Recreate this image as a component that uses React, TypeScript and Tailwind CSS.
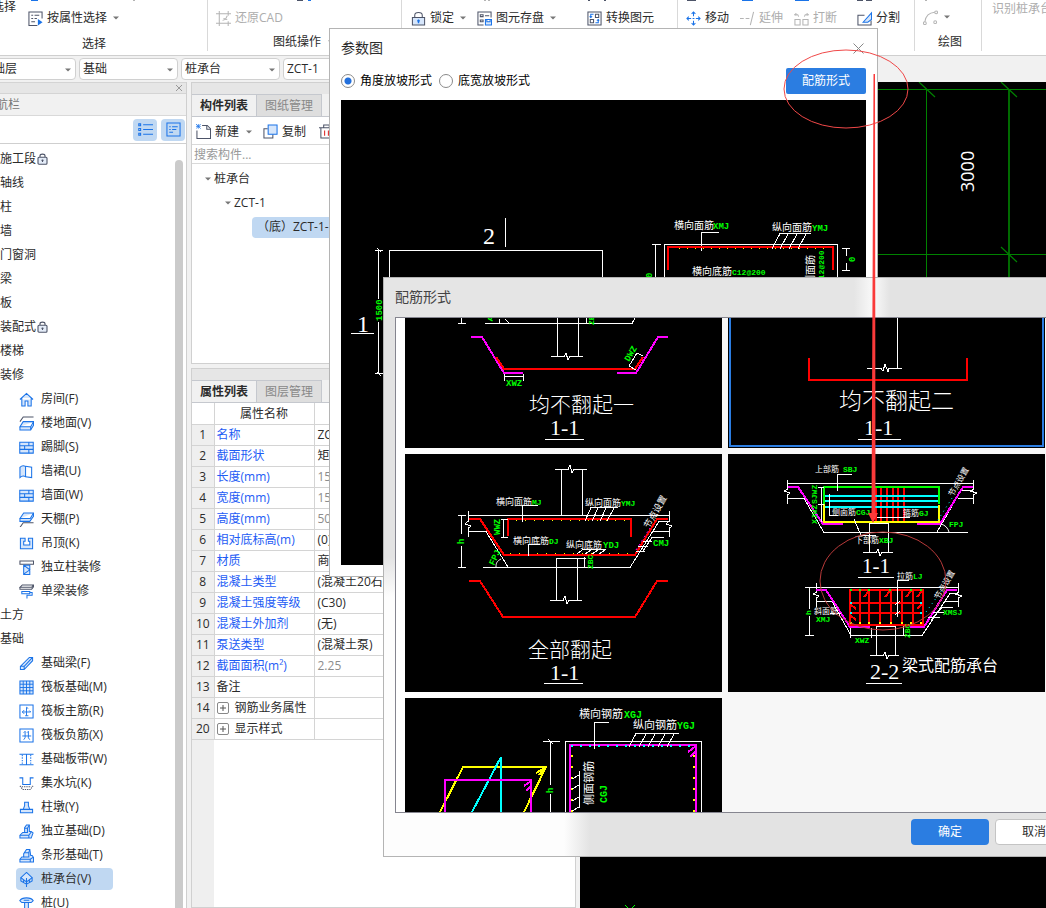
import { useState, type ReactNode } from 'react';
import clsx from 'clsx';

const BLUE = '#1a73e8';
const LIGHT = '#d6e6fb';
const DARK = '#4d5468';
const GREY = '#b4b4b4';

function Icon({ children }: { children: ReactNode }) {
  return (
    <svg
      width="15"
      height="15"
      viewBox="0 0 16 16"
      fill="none"
      stroke={BLUE}
      strokeWidth="1.1"
      className="shrink-0"
      aria-hidden="true"
    >
      {children}
    </svg>
  );
}

function Caret({ className }: { className?: string }) {
  return (
    <svg width="6" height="4" viewBox="0 0 6 4" className={clsx('shrink-0', className)} aria-hidden="true">
      <path d="M0 .5h6L3 3.500z" fill="#777" />
    </svg>
  );
}

function Lock() {
  return (
    <svg width="11" height="12" viewBox="0 0 11 12" fill="none" stroke={DARK} strokeWidth="1.1" aria-hidden="true">
      <path d="M3 4V2.800C3 .6 8 .6 8 2.800V4" />
      <rect x="1" y="4.200" width="9" height="7" rx="1" fill="#e4ecf8" />
      <path d="M5.500 6.500v2.600M4.500 7.400h2" />
    </svg>
  );
}

/* ---------- navigation tree ---------- */

const bricks = (
  <>
    <path d="M.8 2.500h14.400v11.500H.8z" fill={LIGHT} />
    <path d="M.8 6.200h14.400M.8 10h14.400M10.500 2.500v3.700M6 6.200v3.800M10.500 10v4" />
  </>
);

const treeIcons: Record<string, ReactNode> = {
  '房间(F)': <path d="M1 8 8 1.500 15 8M3 6.500V15h3.500V9.500h3V15H13V6.500" fill={LIGHT} />,
  '楼地面(V)': (
    <>
      <path d="M1 6 4.500 1h11" stroke={DARK} />
      <path d="M1 11.500 4.500 6h11L12.500 11.500zM1 11.500V15h11.500l3-5V6M12.500 11.500V15" fill={LIGHT} />
    </>
  ),
  '踢脚(S)': bricks,
  '墙裙(U)': (
    <>
      <path d="M1 3.500C3 1.500 5 1.500 7 2.500v11c-2-1-4-1-6 1z" fill={LIGHT} />
      <path d="M7 2.500 13.500 3.500V14.500L7 13.500" />
    </>
  ),
  '墙面(W)': bricks,
  '天棚(P)': (
    <>
      <path d="M1 7 5 1h10.500L12 7zM1 7v3h10.500L15.500 4.500V1" fill={LIGHT} />
      <path d="M1 16.500 4.500 11.500h11" stroke={DARK} />
    </>
  ),
  '吊顶(K)': <path d="M1.500 2.500H6.500V5.500H5v4h6.500v-4H10V2.500h4.500v11h-13z" fill={LIGHT} />,
  '独立柱装修': (
    <>
      <path d="M1 1h14.500v3.500H1z" stroke={DARK} />
      <path d="M5 5.500h6.500V15.500H5zM5 5.500l6.500 5L5 15" fill={LIGHT} />
    </>
  ),
  '单梁装修': (
    <>
      <path d="M1 3.500 3.500 1h12L13.500 3.500zM1 3.500v2h12.500L15.500 3V1" stroke={DARK} />
      <path d="M3 8h8.500v2.500H3zM11.500 9H14v3H8.500v3.500" />
    </>
  ),
  '基础梁(F)': <path d="M1.500 11 11 1.500h3.500v3.500L5.500 14.500h-4zM1.500 11h4v3.500M5.500 11 14.500 1.500" fill={LIGHT} />,
  '筏板基础(M)': (
    <>
      <path d="M1 1h14v14H1z" fill={LIGHT} />
      <path d="M1 4.500h14M1 8h14M1 11.500h14M4.500 1v14M8 1v14M11.500 1v14" strokeWidth="1" />
    </>
  ),
  '筏板主筋(R)': (
    <>
      <path d="M1 1h14v14H1z" />
      <path d="M8 3.500v9M3.500 8.500h9M9.500 5C9 3.500 8.500 3.500 8 3.500M5.500 6.500l-2 2 2 2M12.500 8.500 11 7M6.500 12.500h3.500" strokeWidth="1" />
    </>
  ),
  '筏板负筋(X)': (
    <>
      <path d="M1 1h14v14H1z" />
      <path d="M6.500 3.500v7l-1.500 2M10 3.500v7l1.500 2M3.500 8.500h9.500M5 5l1.500-1.500M8.500 5 10 3.500" strokeWidth="1" />
    </>
  ),
  '基础板带(W)': (
    <>
      <path d="M.5 2.500h15M.5 13.500h15M8 2.500v11" />
      <path d="M3.500 3v10.500M12.500 3v10.500" strokeDasharray="1.500 1.200" />
    </>
  ),
  '集水坑(K)': (
    <>
      <path d="M.5 2h3.500v7h8V2h3.500" />
      <path d="M1 10.500 4 14.500h8l3-4M3 11.500h10" stroke={DARK} strokeDasharray="1.400 1" />
    </>
  ),
  '柱墩(Y)': <path d="M6 2.500h4v3.500l1.500 4h-7L6 6zM1.500 10h13v3.500h-13z" fill={LIGHT} />,
  '独立基础(D)': (
    <>
      <path d="M1 12 4 9h2V4l2-3h3v7h2l2 1.500-2 5.500H1z" fill={LIGHT} />
      <path d="M1 12h9.500l2.500-3.500M10.500 12v3M6 9h3V4.500H6M9 4.500 11 1" />
    </>
  ),
  '条形基础(T)': (
    <>
      <path d="M1 12 3 9.500h2V6l3-4.500h3.500l1 6.500H14l1.500 2v5H1z" fill={LIGHT} />
      <path d="M1 12h11l3-2M12 12v3M5 9.500h5.500V5H5.500M10.500 5l1-3.500" />
    </>
  ),
  '桩承台(V)': (
    <>
      <path d="M8 0.500 14 6 8 10.500 2 6z" fill={LIGHT} />
      <path d="M2 6v3.500L8 13l6-3.500V6M8 6.500V16M5 8.500v3M11 8.500v3" />
    </>
  ),
  '桩(U)': <path d="M.8 5C3 1 13 1 15.200 5L13 7H3zM6 7v9h4V7M5 4.500h6" fill={LIGHT} />,
};

type NavRow = { label: string; locked?: boolean; child?: boolean };

const navRows: NavRow[] = [
  { label: '施工段', locked: true },
  { label: '轴线' },
  { label: '柱' },
  { label: '墙' },
  { label: '门窗洞' },
  { label: '梁' },
  { label: '板' },
  { label: '装配式', locked: true },
  { label: '楼梯' },
  { label: '装修' },
  ...['房间(F)', '楼地面(V)', '踢脚(S)', '墙裙(U)', '墙面(W)', '天棚(P)', '吊顶(K)', '独立柱装修', '单梁装修'].map(
    label => ({ label, child: true })
  ),
  { label: '土方' },
  { label: '基础' },
  ...[
    '基础梁(F)',
    '筏板基础(M)',
    '筏板主筋(R)',
    '筏板负筋(X)',
    '基础板带(W)',
    '集水坑(K)',
    '柱墩(Y)',
    '独立基础(D)',
    '条形基础(T)',
    '桩承台(V)',
    '桩(U)',
  ].map(label => ({ label, child: true })),
];

function NavPanel() {
  const [active, setActive] = useState('桩承台(V)');

  return (
    <aside className="flex w-[187px] shrink-0 flex-col border-r border-[#cfcfcf] bg-white">
      <div className="flex h-3 shrink-0 items-center justify-end border-y border-[#d4d4d4] bg-[#e6e6e6] pr-[3px]">
        <button aria-label="关闭导航栏">
          <svg width="8" height="8" viewBox="0 0 8 8" stroke="#999">
            <path d="M1 1l6 6M7 1 1 7" />
          </svg>
        </button>
      </div>
      <div className="flex h-[22px] shrink-0 items-center border-b border-[#d9d9d9] bg-[#f1f1f1] text-[#777]">
        <span className="-ml-4">导航栏</span>
      </div>
      <div className="flex h-7 shrink-0 items-center justify-end gap-1 border-b border-[#cfcfcf] pr-px">
        <button className="flex h-[22px] w-6 items-center justify-center rounded-sm bg-[#c0d8f2]" aria-label="列表">
          <Icon>
            <path d="M5.500 3H16M5.500 8H16M5.500 13H16M.8 2h2v2h-2zM.8 7h2v2h-2zM.8 12h2v2h-2z" />
          </Icon>
        </button>
        <button className="flex h-[22px] w-6 items-center justify-center rounded-sm bg-[#c0d8f2]" aria-label="详情">
          <Icon>
            <path d="M1 1h14v14H1zM3.500 5h1.500M6.500 5h6M3.500 8h1.500M6.500 8h4.500M3.500 11h4" />
          </Icon>
        </button>
      </div>
      <div className="flex min-h-0 flex-1 pt-[3px]">
        <ul className="min-w-0 flex-1 overflow-hidden">
          {navRows.map(row => (
            <li key={row.label} className={clsx('flex h-6 items-center', row.child && 'pl-4')}>
              <button
                onClick={() => setActive(row.label)}
                className={clsx(
                  'flex items-center whitespace-nowrap',
                  row.child ? 'h-[22px] gap-[7px] rounded-sm pl-[3px] pr-[22px]' : 'gap-px',
                  row.child && active === row.label && 'bg-[#c0d8f2]'
                )}
              >
                {row.child && <Icon>{treeIcons[row.label]}</Icon>}
                {row.label}
                {row.locked && <Lock />}
              </button>
            </li>
          ))}
        </ul>
        <div className="mr-[3px] mt-[13px] w-2 rounded-t bg-[#cbcbcb]" />
      </div>
    </aside>
  );
}

/* ---------- component list and properties ---------- */

function Tabs({ items }: { items: string[] }) {
  return (
    <div role="tablist" className="flex h-[23px] shrink-0 border-b border-[#c5c8ce] bg-[#f1f1f1]">
      {items.map((item, i) => (
        <button
          key={item}
          role="tab"
          aria-selected={i === 0}
          className={clsx(
            'w-[65px] border-r border-t border-[#c5c8ce]',
            i === 0 ? 'bg-[#f1f1f1] font-bold' : 'bg-[#dedede] text-[#888]'
          )}
        >
          {item}
        </button>
      ))}
    </div>
  );
}

const properties = [
  { no: 1, name: '名称', value: 'ZCT-1' },
  { no: 2, name: '截面形状', value: '矩形' },
  { no: 3, name: '长度(mm)', value: '1500', muted: true },
  { no: 4, name: '宽度(mm)', value: '1500', muted: true },
  { no: 5, name: '高度(mm)', value: '500', muted: true },
  { no: 6, name: '相对底标高(m)', value: '(0)' },
  { no: 7, name: '材质', value: '商品混凝土' },
  { no: 8, name: '混凝土类型', value: '(混凝土20石)' },
  { no: 9, name: '混凝土强度等级', value: '(C30)' },
  { no: 10, name: '混凝土外加剂', value: '(无)' },
  { no: 11, name: '泵送类型', value: '(混凝土泵)' },
  { no: 12, name: '截面面积(m²)', value: '2.25', muted: true },
  { no: 13, name: '备注', value: '', plain: true },
  { no: 14, name: '钢筋业务属性', value: '', plain: true, group: true },
  { no: 20, name: '显示样式', value: '', plain: true, group: true },
];

function PropertyTable() {
  return (
    <table className="w-full table-fixed border-collapse text-left">
      <colgroup>
        <col className="w-[22px]" />
        <col className="w-[100px]" />
        <col />
      </colgroup>
      <thead>
        <tr className="h-[21px] border-b border-[#d4d4d4]">
          <th className="border-r border-[#d4d4d4]" aria-label="序号" />
          <th className="border-r border-[#d4d4d4] p-0 pt-[2px] text-center font-normal">属性名称</th>
          <th className="p-0 pt-[2px] text-center font-normal">属性值</th>
        </tr>
      </thead>
      <tbody>
        {properties.map(p => (
          <tr key={p.no} className="h-[21px] border-b border-[#d4d4d4]">
            <td className="border-r border-[#d4d4d4] bg-[#efefef] p-0 text-center">{p.no}</td>
            <td
              className={clsx(
                'whitespace-nowrap border-r border-[#d4d4d4] p-0 pl-[2px]',
                !p.plain && 'text-[#1d5cf5]'
              )}
            >
              <span className="flex items-center gap-[6px]">
                {p.group && (
                  <button
                    aria-label={`展开${p.name}`}
                    className="flex size-3 items-center justify-center rounded-xs border border-[#888]"
                  >
                    <svg width="6" height="6" viewBox="0 0 6 6" stroke="#555">
                      <path d="M0 3h6M3 0v6" />
                    </svg>
                  </button>
                )}
                {p.name}
              </span>
            </td>
            <td className={clsx('whitespace-nowrap p-0 pl-[3px]', p.muted && 'text-[#8c8c8c]')}>{p.value}</td>
          </tr>
        ))}
      </tbody>
    </table>
  );
}

function ComponentPanel() {
  return (
    <section className="ml-1 flex w-[385px] shrink-0 flex-col">
      <div className="flex h-[282px] shrink-0 flex-col border border-[#d0d0d0] bg-white">
        <div className="h-[11px] shrink-0 bg-[#e6e6e6]" />
        <Tabs items={['构件列表', '图纸管理']} />
        <div className="flex h-7 shrink-0 items-center border-b border-[#d9d9d9] pl-1 pt-[2px]">
          <button className="flex items-center gap-1">
            <Icon>
              <path d="M6.500 1.500H12l3.500 3.500v10.500H1V7" stroke={DARK} />
              <path d="M11.500 1.500v4H15.500" stroke={DARK} />
              <path d="M0 0l5 5M5 0 0 5M2.500 0v5M0 2.500h5" strokeWidth="0.800" />
            </Icon>
            新建
            <Caret className="ml-[3px]" />
          </button>
          <button className="ml-[11px] flex items-center gap-1">
            <Icon>
              <path d="M5 5H1v10h9.500v-4" stroke={DARK} />
              <path d="M5.500 1h9.500v10H5.500z" fill={LIGHT} />
            </Icon>
            复制
          </button>
          <button className="ml-[13px] flex items-center gap-1">
            <Icon>
              <path d="M0 4h16M2 4v11h12V4M5 4V1h6v3" stroke={DARK} />
              <path d="M6 7v5.500M10 7v5.500" stroke="#d22" />
            </Icon>
            删除
          </button>
        </div>
        <input
          aria-label="搜索构件"
          placeholder="搜索构件..."
          className="h-[19px] w-full shrink-0 border-b border-[#d9d9d9] pl-[2px] outline-none placeholder:text-[#999]"
        />
        <ul className="pt-[3px]">
          <li className="flex h-6 items-center gap-[3px] pl-[13px]">
            <Caret />
            桩承台
          </li>
          <li className="flex h-6 items-center gap-[3px] pl-[33px]">
            <Caret />
            ZCT-1
          </li>
          <li className="flex h-6 items-center pl-[60px]">
            <button className="h-[21px] w-[200px] rounded-sm bg-[#c0d8f2] pl-[5px] text-left">（底）ZCT-1-1</button>
          </li>
        </ul>
      </div>
      <div className="mt-1 flex min-h-0 flex-1 flex-col border border-[#d0d0d0] bg-white">
        <div className="h-[11px] shrink-0 bg-[#e6e6e6]" />
        <Tabs items={['属性列表', '图层管理']} />
        <PropertyTable />
        <div className="w-[22px] flex-1 bg-[#efefef]" />
      </div>
    </section>
  );
}

/* ---------- ribbon ---------- */

function Tool({ label, icon, muted, caret }: { label?: string; icon: ReactNode; muted?: boolean; caret?: boolean }) {
  return (
    <button className={clsx('flex h-5 items-center gap-1 whitespace-nowrap', muted && 'text-[#adadad]')}>
      <Icon>{icon}</Icon>
      {label}
      {caret && <Caret className="ml-[2px]" />}
    </button>
  );
}

function Ribbon() {
  return (
    <header className="relative flex h-14 shrink-0 overflow-hidden border-b border-[#cfcfcf] bg-white">
      {/* bottom edge of the tool row scrolled out above */}
      <svg width="1046" height="1" viewBox="0 0 1046 1" className="absolute left-0 top-0" aria-hidden="true">
        <path d="M31 .5h7M308 .5h3M742 .5h11M795 .5h14" stroke={BLUE} />
        <path d="M297 .5h6M687 .5h9M857 .5h6M866 .5h6M588 .5h2M604 .5h2" stroke={DARK} />
        <path d="M133 .5h2M484 .5h2M488 .5h2M925 .5h2" stroke={GREY} />
      </svg>
      <div className="flex h-[51px] w-[208px] shrink-0 flex-col border-r border-[#d9d9d9]">
        <div className="flex h-7 items-start">
          <span className="-ml-2 -mt-[2px]">选择</span>
          <div className="ml-3 pt-2">
            <Tool
              caret
              label="按属性选择"
              icon={
                <>
                  <path d="M10 15.500H1V1h14v7" stroke={DARK} />
                  <path d="M3.500 4.500h2M7 4.500h5M3.500 8h2M7 8h2.500M3.500 11.500h4" stroke={DARK} />
                  <path d="M10.500 8.500v7l5-3.500z" fill={BLUE} stroke="none" />
                </>
              }
            />
          </div>
        </div>
        <div className="pl-[82px] pt-[7px]">选择</div>
      </div>
      <div className="flex h-[51px] w-[194px] shrink-0 flex-col border-r border-[#d9d9d9] pl-2 pt-2">
        <Tool
          muted
          label="还原CAD"
          icon={<path d="M3.500 0v16M0 3h16M13 0v5M0 13h16M13 11v5M7 10l3-1 2-4M8 8l4 1" stroke={GREY} />}
        />
        <div className="flex items-center gap-1 pl-[57px] pt-[5px]">
          图纸操作 <Caret className="ml-[3px]" />
        </div>
      </div>
      <div className="flex h-[51px] w-[276px] shrink-0 items-start border-r border-[#d9d9d9] pl-[9px] pt-2">
        <Tool
          caret
          label="锁定"
          icon={
            <>
              <path d="M4 7V4.500C4 .5 12 .5 12 4.500V7" stroke={DARK} />
              <path d="M1.500 7h13v8h-13z" stroke={DARK} fill={LIGHT} />
              <path d="M8 9v4M6.500 10.500h3" strokeWidth="1.500" />
            </>
          }
        />
        <div className="ml-[11px]">
          <Tool
            caret
            label="图元存盘"
            icon={
              <>
                <path d="M7 15H1V1h14v6" stroke={DARK} />
                <path d="M3.500 4h3v2h-3zM8.500 5H13M3.500 9.500h3v2h-3z" stroke={DARK} />
                <path d="M9 9h6.500v6H9zM10.500 9v2.500H14V9" fill={LIGHT} />
              </>
            }
          />
        </div>
        <div className="ml-[31px]">
          <Tool
            label="转换图元"
            icon={
              <>
                <path d="M1 1h14v14H1z" stroke={DARK} />
                <path d="M9 3.500h3.500V7H9zM3.500 9H7v3.500H3.500z" stroke={DARK} />
                <path d="M7 3.500H4V7M9 12.500h3V9M2.800 5.800 4 7l1.500-1.200M10.500 10.200 12 9l1 1.200" />
              </>
            }
          />
        </div>
      </div>
      <div className="flex h-[51px] w-[237px] shrink-0 items-start border-r border-[#d9d9d9] pl-2 pt-2">
        <Tool
          label="移动"
          icon={
            <path d="M8 1v4.500M8 10.500V15M1 8h4.500M10.500 8H15M6 3l2-2 2 2M6 13l2 2 2-2M3 6 1 8l2 2M13 6l2 2-2 2M7 8h2" />
          }
        />
        <div className="ml-[11px]">
          <Tool muted label="延伸" icon={<path d="M0 8h4M6 8h4M11 15l3.500-14" stroke={GREY} />} />
        </div>
        <div className="ml-[11px]">
          <Tool
            muted
            label="打断"
            icon={<path d="M1 9h5.500v6H1zM9.500 9H15v6H9.500zM0 4h4l1 2M16 4h-4l-1 2M2 2v3M14 2v3" stroke={GREY} />}
          />
        </div>
        <div className="ml-5">
          <Tool
            label="分割"
            icon={
              <>
                <path d="M8 4.500H1V15h14v-5" stroke={DARK} />
                <path d="M6.500 12 15.500 2v7l-4 3z" fill={LIGHT} />
              </>
            }
          />
        </div>
      </div>
      <div className="flex h-[51px] w-[67px] shrink-0 flex-col border-r border-[#d9d9d9] pl-2 pt-2">
        <Tool
          caret
          icon={
            <>
              <path d="M2 12.500C3 6 7 3 12.500 2.500" stroke={GREY} />
              <circle cx="2" cy="14" r="1.500" stroke={GREY} />
              <circle cx="14" cy="2.500" r="1.500" stroke={GREY} />
              <circle cx="13" cy="13" r="1.500" stroke={GREY} />
            </>
          }
        />
        <div className="pl-[15px] pt-[7px]">绘图</div>
      </div>
      <div className="shrink-0 whitespace-nowrap pl-2.5 text-[#adadad]">
        <button className="-mt-[2px]">识别桩承台</button>
      </div>
    </header>
  );
}

const selectors = ['基础层', '基础', '桩承台', 'ZCT-1'];

function SelectorBar() {
  return (
    <div className="flex h-[26px] shrink-0 gap-[3px] bg-[#f1f1f1] pt-[2px]">
      {selectors.map((s, i) => (
        <div key={s} className={clsx('relative h-[22px] w-[99px] shrink-0', i === 0 && '-ml-[23px]')}>
          <select
            aria-label={s}
            className="size-full appearance-none rounded-sm border border-[#d0d0d0] bg-white pl-[3px] outline-none"
          >
            <option>{s}</option>
          </select>
          <Caret className="pointer-events-none absolute right-[5px] top-[10px]" />
        </div>
      ))}
    </div>
  );
}

/* ---------- CAD drawings ---------- */

function Line({ p, c = '#fff', w = 1 }: { p: string; c?: string; w?: number }) {
  return <path d={p} stroke={c} strokeWidth={w} fill="none" shapeRendering="crispEdges" />;
}

type LabelProps = { x: number; y: number; c?: string; s?: string; r?: number; children: string };

function Label({ x, y, c = '#fff', s = 'text-[9px]', r = 0, children }: LabelProps) {
  return (
    <text
      x={x}
      y={y}
      fill={c}
      className={clsx(
        "font-['Liberation_Mono','Noto_Sans_CJK_SC',monospace]",
        s,
        c !== '#fff' && 'font-bold'
      )}
      transform={r ? `rotate(${r} ${x} ${y})` : undefined}
    >
      {children}
    </text>
  );
}

function Caption({ x, y, children, s = 'text-[22px]' }: { x: number; y: number; children: string; s?: string }) {
  return (
    <text x={x} y={y} fill="#fff" className={clsx("font-['Liberation_Serif','Noto_Sans_CJK_SC',serif] font-light", s)}>
      {children}
    </text>
  );
}

const GREEN = '#00ff00';
const RED = '#ff0000';
const PINK = '#ff00ff';
const CYAN = '#00ffff';
const YELLOW = '#ffff00';

const range = (from: number, to: number, step: number) => {
  const out: number[] = [];
  for (let v = from; v <= to; v += step) out.push(v);
  return out;
};

function Dots({ xs, ys, c, size = 2 }: { xs: number[]; ys: number[]; c: string; size?: number }) {
  return (
    <g fill={c} shapeRendering="crispEdges">
      {xs.flatMap(x => ys.map(y => <rect key={`${x}-${y}`} x={x} y={y} width={size} height={size} />))}
    </g>
  );
}

// all drawings share one sheet coordinate system, every frame shows its own window of it
function ParameterDrawing() {
  return (
    <svg viewBox="341 100 525 465" className="w-full bg-black" aria-label="参数图">
      <Caption x={483} y={244} s="text-[24px]">2</Caption>
      <Line p="M505.500 218V247" />
      <Caption x={357} y={332} s="text-[24px]">1</Caption>
      <Line p="M351 333.500H374" />
      <Line p="M389.500 340V250.500H602.500V340" />
      <Line p="M378.500 250V299M378.500 322V374M375 250.500H383M375 373.500H383M377 248l4 4M377 372l4 4" />
      <Label x={382} y={321} c={GREEN} r={-90}>1500</Label>
      <Label x={674} y={229} s="text-[10px]">横向面筋</Label>
      <Label x={713} y={229} c={GREEN}>XMJ</Label>
      <Line p="M701.500 251V232.500H719" />
      <Line p="M664.500 290V244.500H837.500V290" />
      <Line p="M668 270V247H833V270" c={RED} w={2} />
      <Dots xs={range(679, 826, 8)} ys={[248]} c={YELLOW} size={1} />
      <Line p="M655.500 290V244M652 244.500H661" />
      <Label x={652} y={278} c={GREEN} r={-90}>0</Label>
      <Label x={772} y={231} s="text-[10px]">纵向面筋</Label>
      <Label x={812} y={231} c={GREEN}>YMJ</Label>
      <Line p="M811 233.500H780L772 249M788 234l-8 15M797 234l-8 15M806 234l-8 15" />
      <Label x={692} y={275} s="text-[10px]">横向底筋</Label>
      <Label x={732} y={275} c={GREEN} s="text-[8px]">C12@200</Label>
      <Label x={814} y={285} s="text-[10px]" r={-90}>侧面筋</Label>
      <Label x={824} y={284} c={GREEN} s="text-[8px]" r={-90}>C12@200</Label>
      <Line p="M846.500 248V256M846.500 263V271M842 248.500H850M842 270.500H850" />
      <Label x={855} y={262} c={GREEN} r={-90}>0</Label>
    </svg>
  );
}

function FlatOne() {
  return (
    <svg viewBox="405 318 317 130" className="w-full bg-black">
      <Line p="M485 323.500H632L635 318M461.500 318V323M458 323.500H466M499 323v-4M505 319l4 4" />
      <Label x={492} y={322} c={GREEN} s="text-[8px]" r={-60}>PJ</Label>
      <Line p="M557.500 318V356M578.500 318V356M586.500 318V323" />
      <Line p="M551 356.500H564L566 353L568 360L570 356.500H583" />
      <Label x={594} y={325} c={GREEN} s="text-[8px]" r={-90}>ZBC</Label>
      <Line p="M471 337H482L504 373H523M617 373H636L658 337H668" c={PINK} w={2} />
      <Line p="M496 357L504 369H635L643 357" c={RED} w={2} />
      <Line p="M504.500 374V381M523.500 374V381M504 376.500H523M629 366L637 353L643 356M629 366l7 4" />
      <Label x={506} y={386} c={GREEN}>XWZ</Label>
      <Label x={629} y={362} c={GREEN} r={-60}>DWZ</Label>
      <Caption x={529} y={412} s="text-[21px]">均不翻起一</Caption>
      <Caption x={550} y={435}>1-1</Caption>
      <Line p="M545 439.500H584" />
    </svg>
  );
}

function FlatTwo() {
  return (
    <svg viewBox="728 318 317 130" className="w-full bg-black">
      <Line p="M730 318V446H1043V318" c="#2b7de1" w={2} />
      <Line p="M897.500 318V368M867 368.500H881L883 371L885 364L888 372V368.500H902" />
      <Line p="M809 358V380H967V358" c={RED} w={2} />
      <Caption x={839} y={409} s="text-[23px]">均不翻起二</Caption>
      <Caption x={864} y={435}>1-1</Caption>
      <Line p="M858 439.500H901" />
    </svg>
  );
}

function AllTurned() {
  return (
    <svg viewBox="405 454 317 238" className="w-full bg-black">
      <Line p="M555 469.500H568L570 465L572 473L574 469.500H587M561.500 469V515M582.500 469V515" />
      <Line p="M468 515.500H670M468.500 511V521L465 524L471 526L468.500 528V537M669.500 511V521L666 524L672 526L669.500 528V537" />
      <Line p="M468 531.500H486L508 567M483 567.500H630L659 521.500H669M653 531.500H669" />
      <Line p="M469 519H480L504 555H635L657 519H668" c={RED} w={2} />
      <Line p="M508 536V519H631V537" c={RED} w={2} />
      <Dots xs={range(516, 625, 9)} ys={[520]} c={YELLOW} size={1} />
      <Dots xs={range(510, 630, 9)} ys={[553]} c={YELLOW} size={1} />
      <Line p="M461.500 515V534M461.500 546V567M458 515.500H466M458 567.500H466" />
      <Label x={464} y={544} c={GREEN} r={-90}>h</Label>
      <Line p="M503.500 519V537M501 519.500H508M501 537.500H508" />
      <Label x={500} y={535} c={GREEN} r={-90}>WWZ</Label>
      <Label x={496} y={505}>横向面筋</Label>
      <Label x={532} y={505} c={GREEN} s="text-[8px]">MJ</Label>
      <Line p="M522.500 522V505.500H538" />
      <Label x={585} y={506}>纵向面筋</Label>
      <Label x={621} y={506} c={GREEN} s="text-[8px]">YMJ</Label>
      <Line p="M618 507.500H591L585 521M598 508l-6 13M606 508l-6 13M614 508l-7 13" />
      <Label x={513} y={544}>横向底筋</Label>
      <Label x={549} y={544} c={GREEN} s="text-[8px]">DJ</Label>
      <Line p="M528.500 556V544.500H540" />
      <Label x={566} y={548}>纵向底筋</Label>
      <Label x={603} y={548} c={GREEN}>YDJ</Label>
      <Line p="M606 549.500H583L577 554M591 550l-6 4M598 550l-6 4M605 550l-6 4" />
      <Line p="M556.500 600V558.500H577.500V600M550 600.500H563L565 596L567 604L569 600.500H582M584.500 557V567M578 558.500H586" />
      <Label x={593} y={569} c={GREEN} s="text-[8px]" r={-90}>ZBC</Label>
      <Label x={494} y={566} c={GREEN} r={-65}>FPJ</Label>
      <path d="M496 567c0-4 1-6 5-8" stroke="#fff" fill="none" />
      <Label x={649} y={529} r={-60}>节点设置</Label>
      <Line p="M664 537.500H652L643 551M652 541H643M648 546H638M645 551H636" />
      <path d="M636 550 650 528" stroke={PINK} strokeDasharray="2 3" />
      <Label x={653} y={546} c={GREEN}>CMJ</Label>
      <Line p="M469 581H480L503 617H635L657 581H668" c={RED} w={2} />
      <Caption x={528} y={657} s="text-[21px]">全部翻起</Caption>
      <Caption x={550} y={680}>1-1</Caption>
      <Line p="M544 683.500H583" />
    </svg>
  );
}

function BeamCap() {
  return (
    <svg viewBox="728 454 317 238" className="w-full bg-black">
      <Line p="M787 483.500H974M787.500 480V489L784 491L790 493L787.500 495V504M973.500 480V489L970 491L977 493L973.500 495V504" />
      <Line p="M788 498.500H804L824 532.500H968M937 532L961 490.500H973M958 498.500H973" />
      <Line p="M788 487H798L823 524H843M917 524H940L963 487H973" c={PINK} w={2} />
      <Line p="M876 487V521M881 487V521M887 487V521M893 487V521M898 487V521M904 487V521" c={RED} w={2} />
      <Line p="M824 496H939M824 501H939M824 507H939" c={CYAN} w={2} />
      <Line p="M824 504V487H939V504" c={GREEN} w={2} />
      <Line p="M824 504V522H939V505" c={YELLOW} w={2} />
      <Label x={815} y={472} s="text-[8px]">上部筋</Label>
      <Label x={843} y={472} c={GREEN} s="text-[8px]">SBJ</Label>
      <Line p="M837.500 491V474.500H852" />
      <Line p="M821.500 487V522M818 487.500H824M818 504.500H824M829.500 494V515H838" />
      <Label x={817} y={504} c={GREEN} s="text-[8px]" r={-90}>SJWZ</Label>
      <Label x={817} y={524} c={GREEN} s="text-[8px]" r={-90}>XJWZ</Label>
      <Label x={832} y={515} s="text-[8px]">侧面筋</Label>
      <Label x={856} y={515} c={GREEN} s="text-[8px]">CGJ</Label>
      <Label x={903} y={516} s="text-[8px]">箍筋</Label>
      <Label x={919} y={516} c={GREEN} s="text-[8px]">GJ</Label>
      <Line p="M877 517.500H910M854 519L861 535.500H876" />
      <Line p="M869.500 552V523.500H888.500V552M863 552.500H876L878 549L880 556L882 552.500H893" />
      <Label x={855} y={543} s="text-[8px]">下部筋</Label>
      <Label x={879} y={543} c={GREEN} s="text-[8px]">XBJ</Label>
      <Label x={949} y={527} c={GREEN} s="text-[8px]">FPJ</Label>
      <path d="M941 524c4 1 7 4 8 8" stroke="#fff" fill="none" />
      <path d="M938 520 954 495" stroke={CYAN} strokeDasharray="1 4" />
      <Label x={953} y={497} s="text-[8px]" r={-60}>节点设置</Label>
      <Caption x={862} y={573} s="text-[21px]">1-1</Caption>
      <Line p="M858 577.500H894" />

      <Line p="M806 587.500H959M816.500 583V592L813 594L819 596L816.500 598V607M958.500 583V592L955 594L962 596L958.500 598V607" />
      <Line p="M816 601.500H832L851 635.500H922L950 593.500H958M944 601.500H958" />
      <Line p="M816 590H826L850 627H870M910 627H924L947 590H957" c={PINK} w={2} />
      <Line p="M850 590H923V625H850zM850 603H923M850 613H923" c={RED} w={2} />
      <Line p="M860 590V625M869 590V625M880 590V625M891 590V625M902 590V625M913 590V625" c={RED} w={2} />
      <Line p="M869 591l-5 6M890 591l-5 6M911 591l-5 6M922 591l-5 6M850 604l6 5M850 615l6 5M922 604l-5 5" c={RED} w={2} />
      <Dots xs={[850, 859, 868, 889, 910, 920]} ys={[589]} c={GREEN} />
      <Dots xs={[850, 859, 868, 879, 890, 901, 910, 920]} ys={[622]} c={YELLOW} />
      <Dots xs={[850, 920]} ys={[602, 612]} c={CYAN} />
      <Line p="M809.500 587V609M809.500 616V635M805 587.500H814M805 635.500H814" />
      <Label x={811} y={615} c={GREEN} s="text-[8px]" r={-90}>h</Label>
      <Label x={897} y={579} s="text-[8px]">拉筋</Label>
      <Label x={913} y={579} c={GREEN} s="text-[8px]">LJ</Label>
      <Line p="M897.500 617V580.500H909M895 605l5-4M895 615l5-4" />
      <Label x={814} y={614} s="text-[8px]">斜面筋</Label>
      <Label x={816} y={622} c={GREEN} s="text-[8px]">XMJ</Label>
      <Line p="M830 613H841M953 607.500H942L931 620M944 612H933M940 617H928" />
      <Label x={943} y={615} c={GREEN} s="text-[8px]">XMSJ</Label>
      <path d="M926 612 942 590" stroke={CYAN} strokeDasharray="1 4" />
      <Label x={939} y={600} s="text-[8px]" r={-60}>节点设置</Label>
      <Line p="M876.500 655V626.500H895.500V655M870 655.500H883L885 652L887 659L889 655.500H899M903.500 626V635" />
      <Line p="M850.500 628V638M871.500 628V638M851 635.500H871" />
      <Label x={855} y={643} c={GREEN} s="text-[8px]">XWZ</Label>
      <Label x={910} y={638} c={GREEN} s="text-[8px]" r={-90}>ZBC</Label>
      <Caption x={870} y={679}>2-2</Caption>
      <Line p="M866 683.500H902" />
      <Label x={902} y={671} s="text-[16px]">梁式配筋承台</Label>
    </svg>
  );
}

function CageCap() {
  return (
    <svg viewBox="405 698 317 114" className="w-full bg-black">
      <Line p="M440 812L463 767H546L524 812M545 768l-9 5M545 768l-6 7" c={YELLOW} w={2} />
      <Line p="M472 812L501 757V812" c={CYAN} w={2} />
      <Line p="M445 812V780H531V812M531 781l-7 5M531 786l-5 5" c={PINK} w={2} />
      <Line p="M550.500 741V785M550.500 794V812M543 741.500H560M548 739l5 5" />
      <Label x={553} y={793} c={GREEN} r={-90}>h</Label>
      <Line p="M565.500 812V741.500H701.500V812" />
      <Line p="M570 812V745H696V812M696 746l-8 6M696 751l-6 6" c={PINK} w={2} />
      <Dots xs={range(571, 694, 9)} ys={[745]} c={CYAN} />
      <Dots xs={[571, 693]} ys={range(755, 812, 11)} c={YELLOW} />
      <Label x={579} y={718} s="text-[11px]">横向钢筋</Label>
      <Label x={624} y={718} c={GREEN} s="text-[10px]">XGJ</Label>
      <Line p="M594.500 749V722.500H609" />
      <Label x={633} y={729} s="text-[11px]">纵向钢筋</Label>
      <Label x={677} y={729} c={GREEN} s="text-[10px]">YGJ</Label>
      <Line p="M679 733.500H636L629 747M646 734l-7 13M655 734l-7 13M665 734l-7 13M674 734l-7 13" />
      <Line p="M579.500 771V808M572 779l7-4M572 789l7-4M572 801l7-4M572 811l7-4" />
      <Label x={593} y={805} s="text-[11px]" r={-90}>侧面钢筋</Label>
      <Label x={607} y={803} c={GREEN} s="text-[10px]" r={-90}>CGJ</Label>
    </svg>
  );
}

function ModelCanvas() {
  return (
    <main className="ml-1 min-w-0 flex-1 overflow-hidden bg-black">
      <svg width="466" height="826" viewBox="580 82 466 826">
        <path
          d="M870 89.500H1046M870 254.500H1046M926.500 89V300"
          stroke="#008200"
          fill="none"
          shapeRendering="crispEdges"
        />
        <path d="M1009 89V300" stroke="#006a00" strokeWidth="2" />
        <path d="M919 82l16 15M1001 82l16 15M1001 247l16 15" stroke="#008200" strokeWidth="1.200" />
        <text x="974" y="192" fill="#fff" transform="rotate(-90 974 192)" className="font-['Open_Sans',sans-serif] text-[18px]">
          3000
        </text>
        <path d="M625 905l5 5 5-5" stroke={GREEN} fill="none" />
      </svg>
    </main>
  );
}

/* ---------- dialogs ---------- */

function ParameterDialog() {
  return (
    <div
      role="dialog"
      aria-label="参数图"
      className="absolute left-[329px] top-7 flex w-[549px] flex-col border border-[#b4b4b4] bg-white px-[11px] pb-[11px]"
    >
      <div className="flex h-[38px] items-center justify-between">
        <h2 className="text-[14px] leading-5">参数图</h2>
        <button aria-label="关闭" className="pr-[2px]">
          <svg width="11" height="11" viewBox="0 0 11 11" stroke="#888">
            <path d="M.5.5l10 10M10.500.5l-10 10" />
          </svg>
        </button>
      </div>
      <div className="flex h-[33px] items-start justify-between pt-px">
        <fieldset className="flex h-[26px] items-center gap-[7px]">
          {['角度放坡形式', '底宽放坡形式'].map((label, i) => (
            <label key={label} className="flex items-center gap-[5px] text-black">
              <input
                type="radio"
                name="slope"
                defaultChecked={i === 0}
                className="size-[14px] appearance-none rounded-full border border-[#8a8a8a] checked:bg-[radial-gradient(circle,#2370dc_0_3px,transparent_4px)]"
              />
              {label}
            </label>
          ))}
        </fieldset>
        <button className="h-[26px] w-20 rounded-xs bg-[#2b7de1] text-white">配筋形式</button>
      </div>
      <ParameterDrawing />
    </div>
  );
}

const drawings = [
  { name: '均不翻起一', drawing: <FlatOne /> },
  { name: '均不翻起二', drawing: <FlatTwo /> },
  { name: '全部翻起', drawing: <AllTurned /> },
  { name: '梁式配筋承台', drawing: <BeamCap /> },
  { name: '钢筋笼承台', drawing: <CageCap /> },
];

function RebarDialog() {
  return (
    <div
      role="dialog"
      aria-label="配筋形式"
      className="absolute left-[383px] top-[277px] flex w-[702px] flex-col border border-[#b4b4b4]"
    >
      <div className="flex h-[39px] items-center bg-[linear-gradient(to_right,#e5e5e5_470px,#f6f6f6_486px,#f6f6f6_492px,#e3e3e3_506px)] pb-[2px] pl-[11px]">
        <h2 className="text-[14px] leading-5 text-[#444]">配筋形式</h2>
      </div>
      <div className="bg-[linear-gradient(to_bottom,#e3e3e3_240px,#fdfdfd_280px)] px-[11px]">
        <div className="grid grid-cols-[317px_317px] items-start gap-[6px] border border-[#85858f] bg-[linear-gradient(to_right,#fff,#f7f7f7_30%)] pl-[9px]">
          {drawings.map(d => (
            <button key={d.name} aria-label={d.name}>
              {d.drawing}
            </button>
          ))}
        </div>
      </div>
      <div className="flex h-[43px] items-start justify-end gap-[6px] bg-[linear-gradient(to_right,#fdfdfd_180px,#e3e3e3_206px)] pr-[11px] pt-[6px]">
        <button className="h-[26px] w-[78px] rounded-sm bg-[#2b7de1] text-white">确定</button>
        <button className="h-[26px] w-[78px] rounded-sm border border-[#c4c4c4] bg-white">取消</button>
      </div>
    </div>
  );
}

function Annotations() {
  return (
    <svg
      width="1046"
      height="908"
      viewBox="0 0 1046 908"
      fill="none"
      className="pointer-events-none absolute left-0 top-0"
      aria-hidden="true"
    >
      <ellipse cx="846" cy="89" rx="62" ry="39" stroke="#f04848" />
      <ellipse cx="883" cy="581" rx="63" ry="49" stroke="#b83a3a" />
      <path d="M873.500 74h1.500L875.500 513H878L873 523 868 513h3.500z" fill="#fa3a3a" />
    </svg>
  );
}

export default function App() {
  return (
    <div className="relative flex h-screen flex-col overflow-hidden bg-[#f1f1f1] font-['Open_Sans','Noto_Sans_CJK_SC',sans-serif] text-[12px] leading-[18px] text-[#2b2b2b]">
      <Ribbon />
      <SelectorBar />
      <div className="flex min-h-0 flex-1">
        <NavPanel />
        <ComponentPanel />
        <ModelCanvas />
      </div>
      <ParameterDialog />
      <RebarDialog />
      <Annotations />
    </div>
  );
}
